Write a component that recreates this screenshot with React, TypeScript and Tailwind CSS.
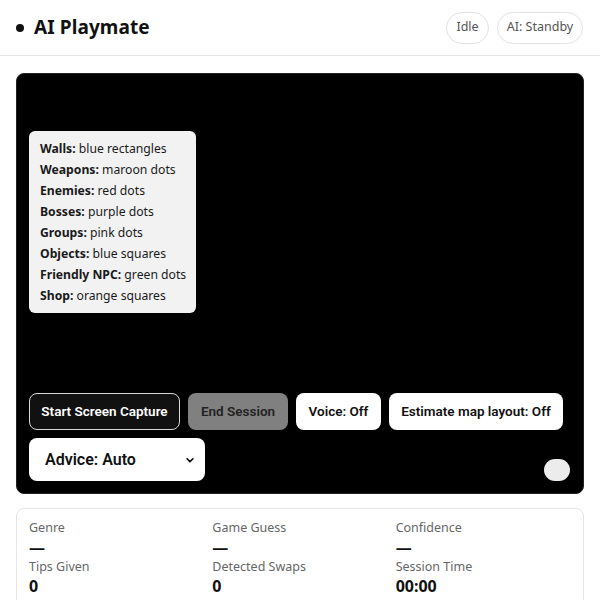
import React from 'react';

const legend: [string, string][] = [
  ['Walls:', 'blue rectangles'],
  ['Weapons:', 'maroon dots'],
  ['Enemies:', 'red dots'],
  ['Bosses:', 'purple dots'],
  ['Groups:', 'pink dots'],
  ['Objects:', 'blue squares'],
  ['Friendly NPC:', 'green dots'],
  ['Shop:', 'orange squares'],
];

const stats: [string, string][] = [
  ['Genre', '—'],
  ['Game Guess', '—'],
  ['Confidence', '—'],
  ['Tips Given', '0'],
  ['Detected Swaps', '0'],
  ['Session Time', '00:00'],
];

const App: React.FC = () => {
  return (
    <div className="min-h-[600px] bg-white text-[#111] font-['Noto_Sans',sans-serif]">
      {/* Header */}
      <header className="h-[56px] flex items-center justify-between pl-4 pr-[17px] border-b border-[#e6e6e6]">
        <div className="flex items-center gap-[10px]">
          <span className="w-[8px] h-[8px] rounded-full bg-[#111]" />
          <h1 className="text-[19px] font-bold tracking-[0.1px]">AI Playmate</h1>
        </div>
        <div className="flex items-center gap-2 text-[12.5px] text-[#555]">
          <span className="w-[43px] h-[32px] flex items-center justify-center rounded-full border border-[#e3e3e3] whitespace-nowrap">Idle</span>
          <span className="w-[86px] h-[32px] flex items-center justify-center rounded-full border border-[#e3e3e3] whitespace-nowrap">AI: Standby</span>
        </div>
      </header>

      <main className="px-4 pt-[17px] flex flex-col gap-[14px]">
        {/* Canvas panel */}
        <section className="h-[421px] bg-black rounded-lg border border-[#222] px-3 pt-[57px] pb-3 flex flex-col">
          <div className="w-[167px] bg-[#f2f2f2] rounded-md px-[11px] pt-[7px] pb-[7px] text-[12.2px] leading-[21px] text-[#1a1a1a]">
            {legend.map(([k, v]) => (
              <div key={k} className="whitespace-nowrap">
                <span className="font-bold">{k}</span> {v}
              </div>
            ))}
          </div>

          <div className="mt-auto flex flex-col gap-2 font-['Roboto',sans-serif] whitespace-nowrap">
            <div className="flex gap-2">
              <button className="w-[151px] h-[37px] shrink-0 rounded-lg bg-[#111] border border-[#d9d9d9] text-white text-[13.5px] font-semibold">
                Start Screen Capture
              </button>
              <button className="w-[100px] h-[37px] shrink-0 rounded-lg bg-[#808080] text-[#222] text-[13.5px] font-semibold">
                End Session
              </button>
              <button className="w-[85px] h-[37px] shrink-0 rounded-lg bg-white text-[#111] text-[13.5px] font-semibold">
                Voice: Off
              </button>
              <button className="w-[174px] h-[37px] shrink-0 rounded-lg bg-white text-[#111] text-[13.5px] font-semibold">
                Estimate map layout: Off
              </button>
            </div>
            <div className="flex items-end justify-between">
              <div className="w-[176px] h-[43px] rounded-lg bg-white flex items-center justify-between pl-[16px] pr-[10px]">
                <span className="text-[16px] font-semibold text-[#111]">Advice: Auto</span>
                <svg width="10" height="10" viewBox="0 0 24 24" fill="none" stroke="#111" strokeWidth={4} strokeLinecap="round" strokeLinejoin="round">
                  <path d="M5 9l7 7 7-7" />
                </svg>
              </div>
              <span className="w-[26px] h-[22px] rounded-full bg-[#ececec] mr-[1px]" />
            </div>
          </div>
        </section>

        {/* Stats */}
        <section className="rounded-lg border border-[#e6e6e6] px-3 pt-[10px] pb-3 grid grid-cols-3 gap-x-2">
          {stats.map(([label, value]) => (
            <div key={label} className="flex flex-col">
              <span className="text-[12.5px] leading-[18px] text-[#666]">{label}</span>
              <span className="text-[16px] leading-[21px] font-bold text-[#111]">{value}</span>
            </div>
          ))}
        </section>
      </main>
    </div>
  );
};

export default App;
